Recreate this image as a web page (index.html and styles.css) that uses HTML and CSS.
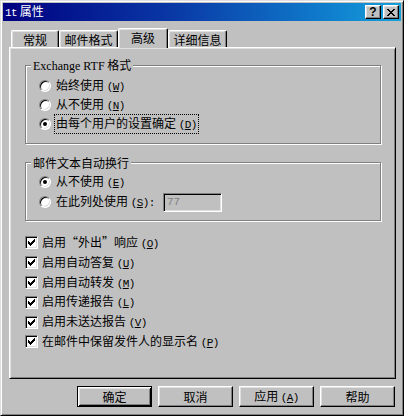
FILE: index.html
```html
<!DOCTYPE html>
<html lang="zh-CN">
<head>
    <meta charset="UTF-8">
    <title>1t 属性</title>
    <link rel="stylesheet" href="styles.css">
</head>
<body>
    <div class="window">
        <div class="titlebar">
            <span class="title"><span class="mono">1t</span> 属性</span>
            <div class="title-buttons">
                <button class="tb-btn help">?</button>
                <button class="tb-btn">
                    <svg width="8" height="7" viewBox="0 0 8 7" shape-rendering="crispEdges">
                        <path d="M0 0h2v1h-2zM6 0h2v1h-2zM1 1h2v1h-2zM5 1h2v1h-2zM2 2h4v1h-4zM3 3h2v1h-2zM2 4h4v1h-4zM1 5h2v1h-2zM5 5h2v1h-2zM0 6h2v1h-2zM6 6h2v1h-2z" fill="#000"/>
                    </svg>
                </button>
            </div>
        </div>

        <div class="dialog">
            <div class="tabs">
                <div class="tab t1">常规</div>
                <div class="tab t2">邮件格式</div>
                <div class="tab active">高级</div>
                <div class="tab t2">详细信息</div>
            </div>

            <div class="panel">
                <fieldset class="group">
                    <legend><span class="serif">Exchange RTF</span> 格式</legend>
                    <div class="row"><span class="radio"></span><span class="label">始终使用 <span class="key">(<u>W</u>)</span></span></div>
                    <div class="row"><span class="radio"></span><span class="label">从不使用 <span class="key">(<u>N</u>)</span></span></div>
                    <div class="row"><span class="radio on"></span><span class="label focus">由每个用户的设置确定 <span class="key">(<u>D</u>)</span></span></div>
                </fieldset>

                <fieldset class="group wrap">
                    <legend>邮件文本自动换行</legend>
                    <div class="row"><span class="radio on"></span><span class="label">从不使用 <span class="key">(<u>E</u>)</span></span></div>
                    <div class="row"><span class="radio"></span><span class="label col">在此列处使用 <span class="key">(<u>S</u>):</span></span><input class="num" type="text" value="77" disabled></div>
                </fieldset>

                <div class="checks">
                    <div class="crow"><span class="check"><svg width="7" height="7" viewBox="0 0 7 7" shape-rendering="crispEdges"><path d="M6 0h1v3h-1zM5 1h1v3h-1zM4 2h1v3h-1zM3 3h1v3h-1zM2 4h1v3h-1zM1 3h1v3h-1zM0 2h1v3h-1z" fill="#000"/></svg></span><span class="label">启用“外出”响应 <span class="key">(<u>O</u>)</span></span></div>
                    <div class="crow"><span class="check"><svg width="7" height="7" viewBox="0 0 7 7" shape-rendering="crispEdges"><path d="M6 0h1v3h-1zM5 1h1v3h-1zM4 2h1v3h-1zM3 3h1v3h-1zM2 4h1v3h-1zM1 3h1v3h-1zM0 2h1v3h-1z" fill="#000"/></svg></span><span class="label">启用自动答复 <span class="key">(<u>U</u>)</span></span></div>
                    <div class="crow"><span class="check"><svg width="7" height="7" viewBox="0 0 7 7" shape-rendering="crispEdges"><path d="M6 0h1v3h-1zM5 1h1v3h-1zM4 2h1v3h-1zM3 3h1v3h-1zM2 4h1v3h-1zM1 3h1v3h-1zM0 2h1v3h-1z" fill="#000"/></svg></span><span class="label">启用自动转发 <span class="key">(<u>M</u>)</span></span></div>
                    <div class="crow"><span class="check"><svg width="7" height="7" viewBox="0 0 7 7" shape-rendering="crispEdges"><path d="M6 0h1v3h-1zM5 1h1v3h-1zM4 2h1v3h-1zM3 3h1v3h-1zM2 4h1v3h-1zM1 3h1v3h-1zM0 2h1v3h-1z" fill="#000"/></svg></span><span class="label">启用传递报告 <span class="key">(<u>L</u>)</span></span></div>
                    <div class="crow"><span class="check"><svg width="7" height="7" viewBox="0 0 7 7" shape-rendering="crispEdges"><path d="M6 0h1v3h-1zM5 1h1v3h-1zM4 2h1v3h-1zM3 3h1v3h-1zM2 4h1v3h-1zM1 3h1v3h-1zM0 2h1v3h-1z" fill="#000"/></svg></span><span class="label">启用未送达报告 <span class="key">(<u>V</u>)</span></span></div>
                    <div class="crow"><span class="check"><svg width="7" height="7" viewBox="0 0 7 7" shape-rendering="crispEdges"><path d="M6 0h1v3h-1zM5 1h1v3h-1zM4 2h1v3h-1zM3 3h1v3h-1zM2 4h1v3h-1zM1 3h1v3h-1zM0 2h1v3h-1z" fill="#000"/></svg></span><span class="label">在邮件中保留发件人的显示名 <span class="key">(<u>P</u>)</span></span></div>
                </div>
            </div>

            <div class="actions">
                <button class="btn default">确定</button>
                <button class="btn">取消</button>
                <button class="btn">应用 <span class="key">(<u>A</u>)</span></button>
                <button class="btn">帮助</button>
            </div>
        </div>
    </div>
</body>
</html>
```

FILE: styles.css
```css
* {
    margin: 0;
    padding: 0;
    box-sizing: border-box;
}

body {
    font-family: "Noto Sans CJK SC", sans-serif;
    font-size: 12px;
    color: #000;
    background-color: #c0c0c0;
}

.mono,
.key {
    font-family: "Liberation Mono", "Noto Sans CJK SC", monospace;
    font-size: 11px;
    letter-spacing: -0.6px;
}

.serif {
    font-family: "Liberation Serif", serif;
    font-size: 12px;
}

.window {
    width: 404px;
    height: 416px;
    background-color: #c0c0c0;
    border: 1px solid;
    border-color: #dfdfdf #000 #000 #dfdfdf;
    box-shadow: inset 1px 1px #fff, inset -1px -1px #808080;
    padding: 2px;
}

/* title bar */
.titlebar {
    height: 18px;
    display: flex;
    align-items: center;
    justify-content: space-between;
    padding: 0 2px;
    color: #fff;
    background: linear-gradient(to right, #000080 0%, #0a3ca8 45%, #1084d0 85%, #18a0d8 100%);
}

.title {
    line-height: 18px;
}

.title-buttons {
    display: flex;
    gap: 2px;
}

.tb-btn {
    width: 16px;
    height: 14px;
    display: flex;
    align-items: center;
    justify-content: center;
    background-color: #c0c0c0;
    border: 1px solid;
    border-color: #fff #000 #000 #fff;
    box-shadow: inset -1px -1px #808080, inset 1px 1px #dfdfdf;
}

.tb-btn.help {
    font-family: "Liberation Sans", sans-serif;
    font-weight: bold;
    font-size: 12px;
    line-height: 12px;
}

/* dialog body */
.dialog {
    padding: 7px 5px 0 6px;
}

.tabs {
    display: flex;
    align-items: flex-end;
    height: 19px;
    padding-left: 2px;
}

.tab {
    height: 17px;
    display: flex;
    align-items: center;
    justify-content: center;
    line-height: 16px;
    padding-top: 1px;
    border: 1px solid;
    border-bottom: none;
    border-color: #fff #000 #000 #fff;
    border-radius: 2px 2px 0 0;
    box-shadow: inset -1px 0 #808080, inset 1px 1px #dfdfdf;
}

.tab.t1 { width: 48px; }
.tab.t2 { width: 59px; }

.tab.active {
    width: 50px;
    height: 20px;
    margin-bottom: -1px;
    padding-top: 0;
    padding-bottom: 2px;
    position: relative;
    background-color: #c0c0c0;
}

.panel {
    height: 332px;
    border: 1px solid;
    border-color: #fff #000 #000 #fff;
    box-shadow: inset 1px 1px #dfdfdf, inset -1px -1px #808080;
    padding: 10px 14px 0 15px;
}

.group {
    border: 1px solid #808080;
    box-shadow: 1px 1px #fff, inset 1px 1px #fff;
    padding: 3px 0 10px 13px;
}

.group legend {
    margin-left: -8px;
    padding: 0 2px;
    line-height: 13px;
    background-color: #c0c0c0;
}

.group.wrap {
    margin-top: 12px;
    padding-top: 3px;
    padding-bottom: 8px;
}

.row {
    height: 19px;
    display: flex;
    align-items: center;
}

.group.wrap .row + .row {
    height: 20px;
    margin-top: 1px;
}

.label {
    line-height: 15px;
    padding: 0 1px;
    margin-left: 3px;
    border: 1px solid transparent;
}

.label.focus {
    border: 1px dotted #000;
}

.label.col {
    width: 109px;
    flex: none;
}

.radio {
    width: 12px;
    height: 12px;
    flex: none;
    display: flex;
    align-items: center;
    justify-content: center;
    border-radius: 50%;
    background-color: #fff;
    border: 1px solid;
    border-color: #808080 #fff #fff #808080;
    box-shadow: inset 1px 1px #000, inset -1px -1px #dfdfdf;
}

.radio.on::after {
    content: "";
    width: 4px;
    height: 4px;
    border-radius: 50%;
    background-color: #000;
}

.num {
    width: 59px;
    height: 19px;
    padding-left: 3px;
    font-family: "Liberation Mono", monospace;
    font-size: 11px;
    color: #808080;
    background-color: #c0c0c0;
    border: 1px solid;
    border-color: #808080 #fff #fff #808080;
    box-shadow: inset 1px 1px #000, inset -1px -1px #dfdfdf;
    outline: none;
}

.checks {
    margin-top: 12px;
}

.crow {
    height: 19.8px;
    display: flex;
    align-items: center;
}

.check {
    width: 13px;
    height: 13px;
    flex: none;
    display: flex;
    align-items: center;
    justify-content: center;
    background-color: #fff;
    border: 1px solid;
    border-color: #808080 #fff #fff #808080;
    box-shadow: inset 1px 1px #000, inset -1px -1px #dfdfdf;
}

.crow .label {
    margin-left: 2px;
}

/* bottom buttons */
.actions {
    display: flex;
    justify-content: flex-end;
    gap: 6px;
    padding-top: 7px;
    padding-right: 1px;
}

.btn {
    width: 75px;
    height: 21px;
    font-family: "Noto Sans CJK SC", sans-serif;
    font-size: 12px;
    line-height: 17px;
    color: #000;
    background-color: #c0c0c0;
    border: 1px solid;
    border-color: #fff #000 #000 #fff;
    box-shadow: inset -1px -1px #808080, inset 1px 1px #dfdfdf;
}

.btn.default {
    border-color: #000;
    box-shadow: inset 1px 1px #fff, inset -1px -1px #000, inset 2px 2px #dfdfdf, inset -2px -2px #808080;
}
```
